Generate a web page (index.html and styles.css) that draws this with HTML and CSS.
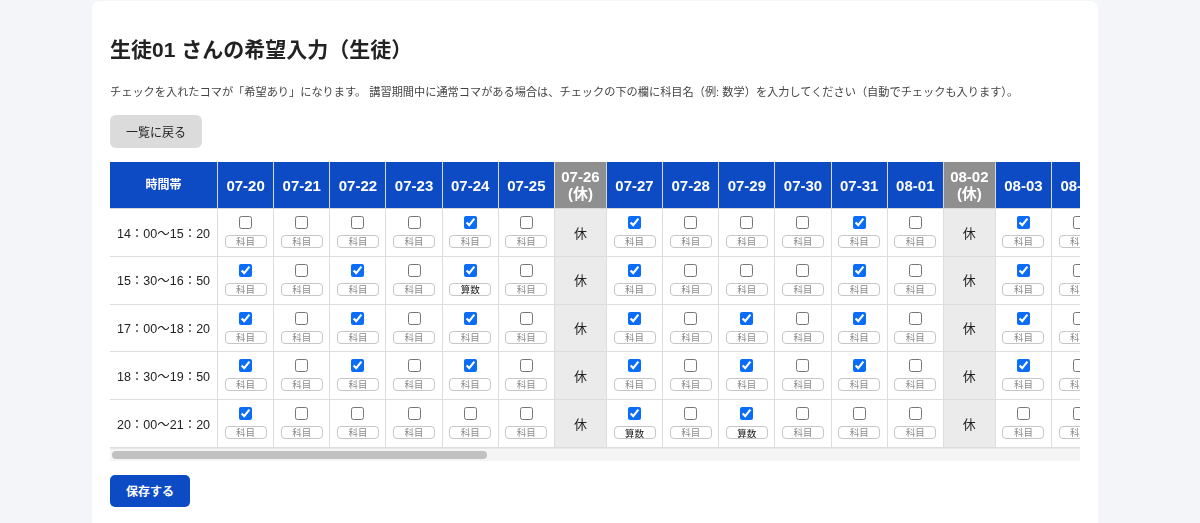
FILE: index.html
```html
<!DOCTYPE html>
<html lang="ja">
<head>
  <meta charset="UTF-8">
  <meta name="viewport" content="width=device-width, initial-scale=1.0">
  <title>生徒01 さんの希望入力</title>
  <link rel="stylesheet" href="styles.css">
</head>
<body>
  <div class="card">
    <h1>生徒01 さんの希望入力（生徒）</h1>
    <p class="note">チェックを入れたコマが「希望あり」になります。 講習期間中に通常コマがある場合は、チェックの下の欄に科目名（例: 数学）を入力してください（自動でチェックも入ります）。</p>
    <button class="btn-back" type="button">一覧に戻る</button>

    <form id="wishForm">
      <div class="table-wrap" id="tableWrap">
        <table class="wish-table" id="wishTable">
          <thead><tr id="headRow"><th class="col-time">時間帯</th></tr></thead>
          <tbody id="bodyRows"></tbody>
        </table>
      </div>
      <div class="scroll-track"><div class="scroll-thumb" id="scrollThumb"></div></div>
      <button class="btn-save" type="submit">保存する</button>
    </form>
  </div>

  <script src="script.js"></script>
</body>
</html>
```

FILE: styles.css
```css
    body {
      font-family: "Liberation Sans", "Noto Sans CJK JP", sans-serif;
      margin: 0;
      padding-right: 10px;
      background-color: #f3f5f8;
      color: #222;
    }
    .card {
      max-width: 970px;
      margin: 1px auto 0;
      padding: 34px 18px 20px;
      background: #fff;
      border-radius: 8px 8px 0 0;
    }
    h1 {
      font-size: 21px;
      line-height: 30px;
      margin: 0 0 18px;
      font-weight: bold;
    }
    .note {
      font-size: 11.2px;
      line-height: 18px;
      color: #444;
      margin: 0 0 14px;
    }
    .btn-back {
      font-family: inherit;
      font-size: 12px;
      width: 92px;
      height: 33px;
      border: none;
      border-radius: 6px;
      background: #dbdbdb;
      color: #222;
      margin-bottom: 14px;
      display: block;
    }
    .table-wrap {
      overflow-x: auto;
      scrollbar-width: none;
    }
    .table-wrap::-webkit-scrollbar {
      display: none;
    }
    /* own scrollbar, the native one is hidden */
    .scroll-track {
      height: 13px;
      background: #f5f5f5;
      border-top: 1px solid #e6e6e6;
      box-sizing: border-box;
      padding: 2px 2px 0;
    }
    .scroll-thumb {
      height: 8px;
      width: 377px;
      border-radius: 4px;
      background: #c1c1c1;
    }
    .wish-table {
      border-collapse: collapse;
      table-layout: fixed;
      width: 2498px;
      background: #fff;
    }
    .wish-table th {
      width: 55.17px;
      height: 46px;
      padding: 0;
      background: #0d4bc4;
      color: #fff;
      font-size: 15px;
      font-weight: bold;
      line-height: 17px;
      border: 1px solid #d8d8d8;
      border-top: none;
    }
    .wish-table th.col-time {
      width: 107px;
      font-size: 12px;
      border-left: none;
    }
    .wish-table th.off {
      width: 51px;
      background: #8f8f8f;
    }
    .wish-table td {
      border: 1px solid #dedede;
      padding: 7px 0 7.8px;
      text-align: center;
      vertical-align: middle;
    }
    .wish-table td.time {
      font-size: 12.5px;
      white-space: nowrap;
      border-left: none;
    }
    .wish-table td.off {
      background: #ebebeb;
      font-size: 13px;
    }
    .wish-table input[type="checkbox"] {
      display: block;
      width: 13px;
      height: 13px;
      margin: 0 auto;
      accent-color: #0b6df6;
    }
    .subj {
      display: block;
      box-sizing: border-box;
      width: 42px;
      height: 13px;
      margin: 6px auto 0;
      padding: 0;
      border: 1px solid #c6c6c6;
      border-radius: 4px;
      font-family: inherit;
      font-size: 9.5px;
      line-height: 11px;
      text-align: center;
      color: #111;
    }
    .subj::placeholder {
      color: #8a8a8a;
    }
    .btn-save {
      font-family: inherit;
      font-size: 12px;
      font-weight: bold;
      width: 80px;
      height: 32px;
      margin-top: 14px;
      border: none;
      border-radius: 5px;
      background: #0d4bc4;
      color: #fff;
    }
```

FILE: script.js
```js
const slots = ["14：00〜15：20", "15：30〜16：50", "17：00〜18：20", "18：30〜19：50", "20：00〜21：20"];

// 1 = 希望あり, 0 = なし, 文字列 = 通常コマの科目
const wishes = [
  [0, 0, 0, 0, 1, 0, 0, 1, 0, 0, 0, 1, 0, 0, 1, 0],
  [1, 0, 1, 0, "算数", 0, 0, 1, 0, 0, 0, 1, 0, 0, 1, 0],
  [1, 0, 1, 0, 1, 0, 0, 1, 0, 1, 0, 1, 0, 0, 1, 0],
  [1, 0, 1, 0, 1, 0, 0, 1, 0, 1, 0, 1, 0, 0, 1, 0],
  [1, 0, 0, 0, 0, 0, 0, "算数", 0, "算数", 0, 0, 0, 0, 0, 0]
];

const days = [];
for (let i = 0; i < 43; i++) {
  const d = new Date(2025, 6, 20 + i);
  const label = String(d.getMonth() + 1).padStart(2, "0") + "-" + String(d.getDate()).padStart(2, "0");
  days.push({ label: label, off: d.getDay() === 6 });
}

const headRow = document.getElementById("headRow");
days.forEach(function (day) {
  const th = document.createElement("th");
  if (day.off) {
    th.className = "off";
    th.innerHTML = day.label + "<br>(休)";
  } else {
    th.textContent = day.label;
  }
  headRow.appendChild(th);
});

function wishFor(row, i) {
  if (i < wishes[row].length) return wishes[row][i];
  const v = wishes[row][7 + ((i - 7) % 7)];
  return v ? 1 : 0;
}

const body = document.getElementById("bodyRows");
slots.forEach(function (slot, r) {
  const tr = document.createElement("tr");
  const time = document.createElement("td");
  time.className = "time";
  time.textContent = slot;
  tr.appendChild(time);

  days.forEach(function (day, i) {
    const td = document.createElement("td");
    if (day.off) {
      td.className = "off";
      td.textContent = "休";
    } else {
      const w = wishFor(r, i);
      const cb = document.createElement("input");
      cb.type = "checkbox";
      cb.checked = !!w;
      const subj = document.createElement("input");
      subj.className = "subj";
      subj.placeholder = "科目";
      if (typeof w === "string") subj.value = w;
      subj.addEventListener("input", function () {
        if (subj.value) cb.checked = true;
      });
      td.appendChild(cb);
      td.appendChild(subj);
    }
    tr.appendChild(td);
  });
  body.appendChild(tr);
});

// scrollbar thumb follows the table
const wrap = document.getElementById("tableWrap");
const thumb = document.getElementById("scrollThumb");
function syncThumb() {
  const track = wrap.clientWidth - 4;
  const ratio = wrap.clientWidth / wrap.scrollWidth;
  thumb.style.width = Math.round(track * ratio) + "px";
  thumb.style.marginLeft = Math.round(track * wrap.scrollLeft / wrap.scrollWidth) + "px";
}
wrap.addEventListener("scroll", syncThumb);
syncThumb();

document.getElementById("wishForm").addEventListener("submit", function (e) {
  e.preventDefault();
});
```
